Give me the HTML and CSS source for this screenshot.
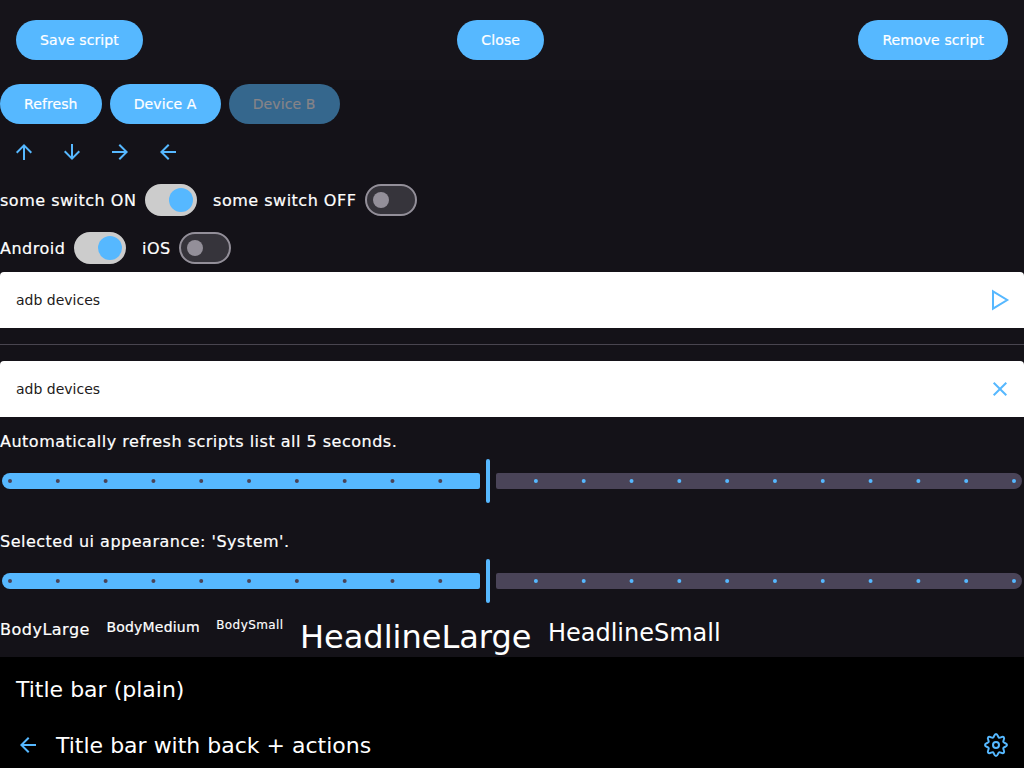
FILE: index.html
```html
<!DOCTYPE html>
<html lang="en">
<head>
<meta charset="utf-8">
<title>Scripts</title>
<link rel="stylesheet" href="styles.css">
</head>
<body>
<header class="topbar">
  <button class="btn">Save script</button>
  <button class="btn">Close</button>
  <button class="btn">Remove script</button>
</header>
<main class="content">
  <div class="row buttons">
    <button class="btn">Refresh</button>
    <button class="btn device">Device A</button>
    <button class="btn device disabled" disabled>Device B</button>
  </div>
  <div class="row icons">
    <span class="icon-btn"><svg class="icon" viewBox="0 0 24 24"><path class="solid" d="M11 20V7.825L5.400 13.425 4 12l8-8 8 8-1.400 1.425L13 7.825V20z"/></svg></span>
    <span class="icon-btn"><svg class="icon" viewBox="0 0 24 24"><path class="solid" d="M11 4v12.175L5.400 10.575 4 12l8 8 8-8-1.400-1.425L13 16.175V4z"/></svg></span>
    <span class="icon-btn"><svg class="icon" viewBox="0 0 24 24"><path class="solid" d="M4 11h12.175L10.575 5.400 12 4l8 8-8 8-1.425-1.400L16.175 13H4z"/></svg></span>
    <span class="icon-btn"><svg class="icon" viewBox="0 0 24 24"><path class="solid" d="M20 11H7.825L13.425 5.400 12 4l-8 8 8 8 1.425-1.400L7.825 13H20z"/></svg></span>
  </div>
  <div class="row switches">
    <span class="body-large">some switch ON</span><span class="switch on"></span>
    <span class="body-large">some switch OFF</span><span class="switch"></span>
  </div>
  <div class="row switches">
    <span class="body-large">Android</span><span class="switch on"></span>
    <span class="body-large">iOS</span><span class="switch"></span>
  </div>
  <div class="field"><span>adb devices</span><svg class="icon" viewBox="0 0 24 24"><path d="M5 3.300l14.200 8.700L5 20.700z"/></svg></div>
  <hr class="divider">
  <div class="field"><span>adb devices</span><svg class="icon" viewBox="0 0 24 24"><path d="M5.700 5.700l12.600 12.600M18.300 5.700L5.700 18.300"/></svg></div>
  <section class="slider-block">
    <p class="body-large">Automatically refresh scripts list all 5 seconds.</p>
    <svg class="slider" viewBox="0 0 1024 44"><use href="#slider"/></svg>
  </section>
  <section class="slider-block">
    <p class="body-large">Selected ui appearance: 'System'.</p>
    <svg class="slider" viewBox="0 0 1024 44">
      <g id="slider">
        <path class="active" d="M10 14H478a2 2 0 0 1 2 2V28a2 2 0 0 1-2 2H10a8 8 0 0 1 0-16z"/>
        <path class="inactive" d="M498 14H1014a8 8 0 0 1 0 16H498a2 2 0 0 1-2-2V16a2 2 0 0 1 2-2z"/>
        <rect class="active" x="486" y="0" width="4" height="44" rx="2"/>
        <path class="dots-dark" d="M10 22h430.500"/>
        <path class="dots-light" d="M535.900 22h478.200"/>
      </g>
    </svg>
  </section>
  <div class="samples">
    <span class="body-large">BodyLarge</span>
    <span class="body-medium">BodyMedium</span>
    <span class="body-small">BodySmall</span>
    <span class="headline-large">HeadlineLarge</span>
    <span class="headline-small">HeadlineSmall</span>
  </div>
</main>
<footer class="titlebars">
  <div class="titlebar">Title bar (plain)</div>
  <div class="titlebar nav">
    <svg class="icon" viewBox="0 0 24 24"><path class="solid" d="M20 11H7.825L13.425 5.400 12 4l-8 8 8 8 1.425-1.400L7.825 13H20z"/></svg>
    <span class="title">Title bar with back + actions</span>
    <svg class="icon" viewBox="0 0 24 24">
      <path id="cog-quarter" d="M12 1C13.900 1 13.900 4.240 15.020 4.700C16.120 5.160 18.440 2.880 19.780 4.220C21.120 5.560 18.840 7.880 19.300 8.980C19.760 10.080 23 10.100 23 12"/>
      <use href="#cog-quarter" transform="rotate(90 12 12)"/>
      <use href="#cog-quarter" transform="rotate(180 12 12)"/>
      <use href="#cog-quarter" transform="rotate(270 12 12)"/>
      <circle cx="12" cy="12" r="3"/>
    </svg>
  </div>
</footer>
</body>
</html>
```
FILE: styles.css
```css
* { box-sizing: border-box; }
body { margin: 0; height: 768px; overflow: hidden; background: #141218; color: #fff; font-family: "DejaVu Sans", sans-serif; }
.topbar { height: 80px; padding: 0 16px; display: flex; align-items: center; justify-content: space-between; background: #16141a; }
.btn { height: 40px; padding: 0 24px; border: 0; border-radius: 20px; background: #56b8ff; color: #fff; font: 14px "DejaVu Sans", sans-serif; letter-spacing: .1px; -webkit-text-stroke: .2px; }
.btn.device { width: 111px; }
.btn.disabled { background: #35678d; color: #868488; }
.row { display: flex; align-items: center; height: 48px; }
.buttons { gap: 8px; }
.icon-btn { width: 48px; height: 48px; display: flex; align-items: center; justify-content: center; }
.icon { width: 24px; height: 24px; flex: none; fill: none; stroke: #56b8ff; stroke-width: 2; }
.icon .solid { fill: #56b8ff; stroke: none; }
.body-large { font-size: 16px; line-height: 24px; letter-spacing: .5px; margin: 0; padding-top: 1px; white-space: nowrap; -webkit-text-stroke: .2px; }
.switch { width: 52px; height: 32px; margin: 0 16px 0 8.700px; border-radius: 16px; border: 2px solid #938f99; background: #36343b; display: flex; align-items: center; padding-left: 6px; }
.switch::before { content: ""; width: 16px; height: 16px; border-radius: 50%; background: #938f99; }
.switch.on { border-color: #ccc; background: #ccc; padding-left: 22px; }
.switch.on::before { width: 24px; height: 24px; background: #56b8ff; }
.field { height: 56px; padding: 0 12px 0 16px; display: flex; align-items: center; justify-content: space-between; background: #fff; color: #1d1b20; border-radius: 4px 4px 0 0; font-size: 14px; }
.divider { margin: 16px 0; border: 0; height: 1px; background: #49454f; }
.slider-block { height: 100px; padding-top: 12px; }
.slider { display: block; width: 1024px; height: 44px; margin-top: 5px; }
.active { fill: #56b8ff; }
.inactive { fill: #4a4458; }
.dots-dark, .dots-light { fill: none; stroke-width: 4; stroke-linecap: round; stroke-dasharray: 0 47.810; }
.dots-dark { stroke: #4a4458; }
.dots-light { stroke: #56b8ff; }
.samples { height: 40px; display: flex; align-items: flex-start; gap: 16.500px; white-space: nowrap; }
.body-medium { font-size: 14px; line-height: 20px; letter-spacing: .2px; -webkit-text-stroke: .2px; }
.body-small { font-size: 12px; line-height: 16px; letter-spacing: .4px; -webkit-text-stroke: .15px; }
.headline-large { font-size: 32px; line-height: 40px; }
.headline-small { font-size: 24px; line-height: 32px; }
.titlebars { background: #000; font-size: 22px; height: 111px; padding-top: 4px; }
.titlebar { height: 56px; padding: 1px 16px 0; display: flex; align-items: center; line-height: 28px; }
.titlebar.nav { gap: 16px; padding-top: 0; }
.title { flex: 1; padding-top: 1px; }
```
